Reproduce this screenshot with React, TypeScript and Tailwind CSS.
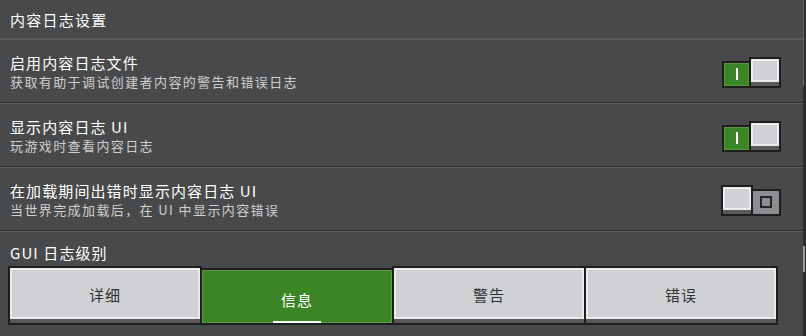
import { useState } from 'react';

const font = { fontFamily: '"Noto Sans CJK SC", "Noto Sans", sans-serif' };

function Separator() {
  return (
    <div className="flex flex-col">
      <div className="h-px bg-[#343435]" />
      <div className="h-px bg-[#5b5b5c]" />
    </div>
  );
}

function Knob() {
  return (
    <div className="w-[32px] h-[31px] border-2 border-[#1e1e1f] bg-[#58585a] flex flex-col">
      <div className="flex-1 bg-[#d0d1d4] border-[2px] border-[#ececec]" />
      <div className="h-[4px]" />
    </div>
  );
}

function Toggle({ on }: { on: boolean }) {
  if (on) {
    return (
      <div className="flex items-end">
        <div className="w-[29px] h-[27px] border-2 border-[#1e1e1f] bg-[#3c8527] flex items-center justify-center">
          <div className="w-full h-full border border-[#4f9a3a] flex items-center justify-center">
            <div className="w-[2px] h-[12px] bg-white" />
          </div>
        </div>
        <div className="-ml-[2px]">
          <Knob />
        </div>
      </div>
    );
  }
  return (
    <div className="flex items-end">
      <Knob />
      <div className="-ml-[2px] w-[30px] h-[27px] border-2 border-[#1e1e1f] bg-[#8c8d90] flex items-center justify-center">
        <div className="w-[12px] h-[12px] border-[2px] border-[#232324]" />
      </div>
    </div>
  );
}

function SettingRow({ title, desc, on }: { title: string; desc: string; on: boolean }) {
  return (
    <div className="h-[62px] flex items-center justify-between pl-[10px] pr-[22px]">
      <div className="flex flex-col pt-[2px]">
        <span className="text-[15px] leading-[20px] tracking-[1.1px] text-white">{title}</span>
        <span className="text-[13px] leading-[18px] tracking-[1.4px] text-[#cfcfd0]">{desc}</span>
      </div>
      <div className="pt-[2px]">
        <Toggle on={on} />
      </div>
    </div>
  );
}

const levels = ['详细', '信息', '警告', '错误'];

export default function App() {
  const [level, setLevel] = useState(1);

  return (
    <div className="w-[806px] h-[336px] bg-[#48494a] flex overflow-hidden" style={font}>
      <div className="flex-1 flex flex-col">
        <div className="h-[38px] flex items-center pl-[10px] pt-[3px]">
          <span className="text-[15px] tracking-[1.25px] text-white">内容日志设置</span>
        </div>
        <div className="h-[2px] bg-[#5b5b5c]" />
        <SettingRow title="启用内容日志文件" desc="获取有助于调试创建者内容的警告和错误日志" on />
        <Separator />
        <SettingRow title="显示内容日志 UI" desc="玩游戏时查看内容日志" on />
        <Separator />
        <SettingRow title="在加载期间出错时显示内容日志 UI" desc="当世界完成加载后，在 UI 中显示内容错误" on={false} />
        <Separator />
        <div className="flex flex-col px-[8px] pt-[10px]">
          <span className="pl-[2px] text-[15px] leading-[22px] tracking-[1.1px] text-white">GUI 日志级别</span>
          <div className="mt-[2px] flex items-end h-[59px] w-[770px]">
            {levels.map((l, i) =>
              i === level ? (
                <button
                  key={l}
                  onClick={() => setLevel(i)}
                  className={`relative flex-1 h-[57px] border-2 border-[#1e1e1f] bg-[#3c8527] ${i > 0 ? '-ml-[2px]' : ''}`}
                >
                  <div className="w-full h-full border border-[#5c9a4a] flex items-center justify-center pt-[8px]">
                    <span className="text-[15px] tracking-[1px] text-white">{l}</span>
                  </div>
                  <div className="absolute left-1/2 -translate-x-1/2 bottom-0 w-[48px] h-[2px] bg-white" />
                </button>
              ) : (
                <button
                  key={l}
                  onClick={() => setLevel(i)}
                  className={`flex-1 h-[59px] border-2 border-[#1e1e1f] bg-[#58585a] flex flex-col ${i > 0 ? '-ml-[2px]' : ''}`}
                >
                  <div className="w-full flex-1 bg-[#d0d1d4] border-[2px] border-[#ececec] flex items-center justify-center pt-[4px]">
                    <span className="text-[15px] tracking-[1px] text-[#313233]">{l}</span>
                  </div>
                  <div className="h-[4px]" />
                </button>
              )
            )}
          </div>
        </div>
      </div>
      <div className="w-[3px] bg-[#2b2c2b] flex flex-col">
        <div className="h-[86px] w-[1px] bg-[#5d6a78]" />
        <div className="mt-[160px] h-[26px] w-[2px] bg-[#9a9a9a]" />
      </div>
    </div>
  );
}
